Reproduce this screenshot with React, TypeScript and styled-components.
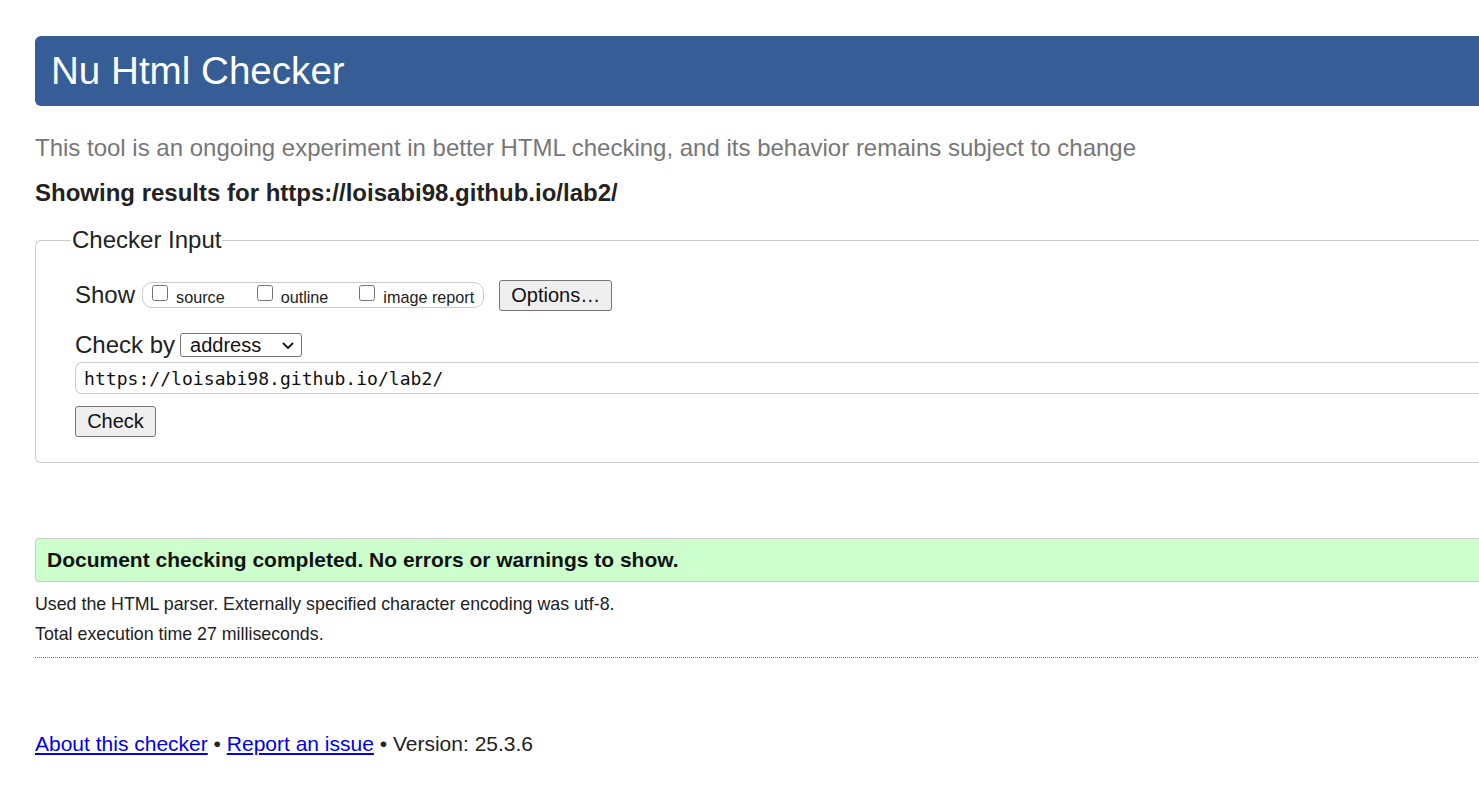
import React from "react";
import styled, { createGlobalStyle } from "styled-components";

const Global = createGlobalStyle`
  html, body { margin: 0; padding: 0; background: #fff; overflow: hidden; }
  body { font-family: "Liberation Sans", Arial, sans-serif; color: #222; }
`;

const Page = styled.div`
  width: 1620px;
  padding: 36px 0 0 35px;
  box-sizing: border-box;
`;

const Header = styled.h1`
  margin: 0;
  height: 70px;
  line-height: 70px;
  background: #365d95;
  color: #fff;
  font-size: 38.6px;
  font-weight: normal;
  padding-left: 16px;
  border-radius: 6px 0 0 6px;
`;

const Subtitle = styled.p`
  margin: 26px 0 0;
  font-size: 24px;
  line-height: 32px;
  color: #777;
`;

const Showing = styled.p`
  margin: 15px 0 0;
  font-size: 24px;
  line-height: 28px;
  font-weight: bold;
  color: #222;
`;

const Fieldset = styled.fieldset`
  margin: 19px 0 0;
  padding: 22px 0 25px 39px;
  border: 1px solid #ccc;
  border-right: none;
  border-radius: 6px 0 0 6px;
  min-width: 0;
`;

const Legend = styled.legend`
  font-size: 24px;
  padding: 0 1px;
  margin-left: -4px;
  color: #222;
  line-height: 28px;
`;

const Row = styled.div`
  display: flex;
  align-items: center;
  font-size: 24px;
  color: #222;
`;

const ShowRow = styled(Row)`
  height: 36px;
  padding-top: 1px;
`;

const CheckGroup = styled.span`
  display: inline-flex;
  align-items: center;
  box-sizing: border-box;
  height: 26px;
  border: 1px solid #ccc;
  border-radius: 10px;
  margin-left: 7px;
  padding: 0 9px 0 9px;
`;

const CheckLabel = styled.label<{ $gap: number }>`
  display: inline-flex;
  align-items: center;
  font-size: 16.2px;
  color: #222;
  margin-right: ${(p) => p.$gap}px;
  input {
    margin: 0 8px 5px 0;
    width: 16px;
    height: 16px;
  }
  span { padding-top: 5px; }
`;

const Button = styled.button<{ $w: number }>`
  font-family: "Liberation Sans", Arial, sans-serif;
  font-size: 20px;
  height: 31px;
  width: ${(p) => p.$w}px;
  padding: 0;
  color: #111;
  background: #efefef;
  border: 1px solid #767676;
  border-radius: 3px;
`;

const OptionsButton = styled(Button)`
  margin-left: 15px;
`;

const CheckByRow = styled(Row)`
  margin-top: 17px;
  height: 30px;
`;

const SelectWrap = styled.span`
  position: relative;
  display: inline-flex;
  margin-left: 5px;
`;

const Select = styled.select`
  appearance: none;
  -webkit-appearance: none;
  width: 122px;
  height: 24px;
  box-sizing: border-box;
  font-family: "Liberation Sans", Arial, sans-serif;
  font-size: 20px;
  line-height: 22px;
  color: #111;
  border: 1px solid #767676;
  border-radius: 3px;
  background: #fff;
  padding: 0 0 0 9px;
`;

const Chevron = styled.svg`
  position: absolute;
  right: 8px;
  top: 9px;
  width: 12px;
  height: 7px;
  pointer-events: none;
`;

const UrlInput = styled.div`
  margin-top: 2px;
  height: 32px;
  box-sizing: border-box;
  border: 1px solid #ccc;
  border-radius: 7px;
  border-right: none;
  display: flex;
  align-items: center;
  padding-left: 8px;
  font-family: "DejaVu Sans Mono", "Liberation Mono", monospace;
  font-size: 18px;
  letter-spacing: 0.05px;
  color: #111;
`;

const CheckButton = styled(Button)`
  margin-top: 12px;
  display: block;
`;

const Success = styled.div`
  margin-top: 75px;
  height: 44px;
  box-sizing: border-box;
  background: #ccffcc;
  border: 1px solid #ccc;
  border-right: none;
  border-radius: 4px 0 0 4px;
  display: flex;
  align-items: center;
  padding-left: 11px;
  font-size: 21px;
  font-weight: bold;
  color: #111;
`;

const Info = styled.p`
  margin: 0;
  font-size: 17.8px;
  line-height: 30px;
  color: #222;
`;

const InfoBlock = styled.div`
  margin-top: 7px;
  padding-bottom: 8px;
  border-bottom: 1px dotted #777;
`;

const Footer = styled.p`
  margin: 72px 0 0;
  font-size: 21px;
  line-height: 28px;
  color: #222;
  a { color: #0000ee; text-decoration: underline; }
`;

export default function App() {
  return (
    <>
      <Global />
      <Page>
        <Header>Nu Html Checker</Header>
        <Subtitle>
          This tool is an ongoing experiment in better HTML checking, and its behavior remains subject to change
        </Subtitle>
        <Showing>Showing results for https://loisabi98.github.io/lab2/</Showing>
        <Fieldset>
          <Legend>Checker Input</Legend>
          <ShowRow>
            Show
            <CheckGroup>
              <CheckLabel $gap={32}>
                <input type="checkbox" />
                <span>source</span>
              </CheckLabel>
              <CheckLabel $gap={31}>
                <input type="checkbox" />
                <span>outline</span>
              </CheckLabel>
              <CheckLabel $gap={0}>
                <input type="checkbox" />
                <span>image report</span>
              </CheckLabel>
            </CheckGroup>
            <OptionsButton $w={113}>Options…</OptionsButton>
          </ShowRow>
          <CheckByRow>
            Check by
            <SelectWrap>
              <Select defaultValue="address">
                <option value="address">address</option>
                <option value="file">file upload</option>
                <option value="text">text input</option>
              </Select>
              <Chevron viewBox="0 0 12 7">
                <path d="M1 1 L6 6 L11 1" fill="none" stroke="#111" strokeWidth="1.8" />
              </Chevron>
            </SelectWrap>
          </CheckByRow>
          <UrlInput>https://loisabi98.github.io/lab2/</UrlInput>
          <CheckButton $w={81}>Check</CheckButton>
        </Fieldset>
        <Success>Document checking completed. No errors or warnings to show.</Success>
        <InfoBlock>
          <Info>Used the HTML parser. Externally specified character encoding was utf-8.</Info>
          <Info>Total execution time 27 milliseconds.</Info>
        </InfoBlock>
        <Footer>
          <a href="#about">About this checker</a> • <a href="#report">Report an issue</a> • Version: 25.3.6
        </Footer>
      </Page>
    </>
  );
}
